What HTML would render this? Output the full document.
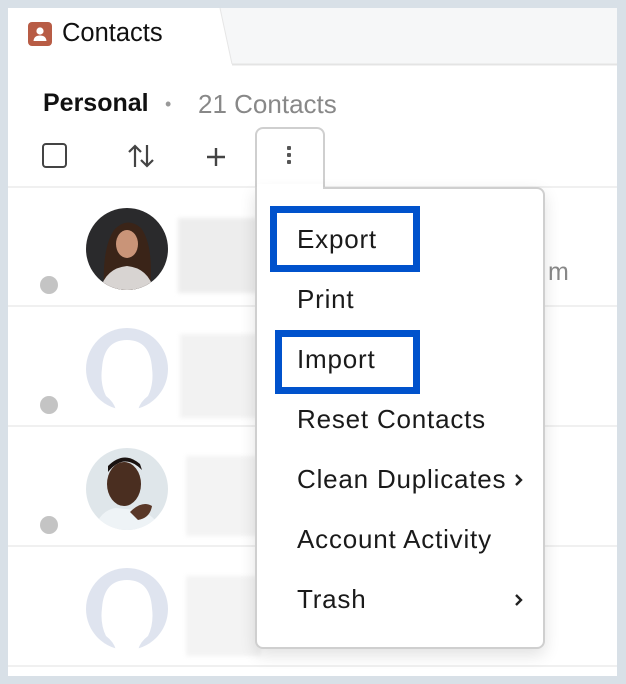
<!DOCTYPE html>
<html><head><meta charset="utf-8"><style>
*{margin:0;padding:0;box-sizing:border-box}
body{width:626px;height:684px;background:#d8e0e7;font-family:"Liberation Sans",sans-serif;position:relative;overflow:hidden}
#main{position:absolute;left:8px;top:8px;width:609px;height:668px;background:#fff;overflow:hidden}
.abs{position:absolute}
.sep{position:absolute;left:0;width:609px;height:2px;background:#f0f0f0}
.dot{position:absolute;width:18px;height:18px;border-radius:50%;background:#c4c4c4}
.blur{position:absolute;background:#ededed;filter:blur(2px)}
.item{position:absolute;left:297px;font-size:26px;letter-spacing:.8px;color:#1a1a1a;line-height:30px}
.box{position:absolute;border:7px solid #0052cc}
</style></head><body>
<div id="main">
 <svg class="abs" style="left:0;top:0" width="609" height="58"><polygon points="212,0 609,0 609,56 224,56" fill="#f6f7f8"/><line x1="212" y1="0" x2="224" y2="56" stroke="#e6e6e6"/><line x1="224" y1="56.5" x2="609" y2="56.5" stroke="#e4e4e4" stroke-width="2"/></svg>
 <svg class="abs" style="left:20px;top:14px" width="24" height="24"><rect width="24" height="24" rx="4" fill="#b85c45"/><circle cx="12" cy="9" r="3.6" fill="#fff"/><path d="M5.5 19 Q6 13.5 12 13.5 Q18 13.5 18.5 19 Z" fill="#fff"/></svg>
 <div class="abs" style="left:54px;top:11px;font-size:25.5px;color:#111">Contacts</div>
 <div class="abs" style="left:35px;top:81px;font-size:25px;font-weight:bold;color:#111">Personal</div>
 <div class="abs" style="left:157px;top:86px;font-size:18px;color:#999">•</div>
 <div class="abs" style="left:190px;top:81px;font-size:26px;color:#888">21 Contacts</div>
 <div class="abs" style="left:34px;top:135px;width:25px;height:25px;border:2px solid #444;border-radius:4px"></div>
 <svg class="abs" style="left:118px;top:134px" width="32" height="28" fill="none" stroke="#444" stroke-width="2.2"><path d="M9 25V4M3 10l6-6 6 6"/><path d="M21 3v21M15 18l6 6 6-6"/></svg>
 <svg class="abs" style="left:197px;top:138px" width="22" height="22" stroke="#444" stroke-width="2.4"><path d="M11 2v18M2 11h18"/></svg>
 <div class="sep" style="top:178px;width:247px"></div>
 <div class="sep" style="top:178px;left:317px;width:292px"></div>
 <div class="sep" style="top:297px"></div><div class="sep" style="top:417px"></div><div class="sep" style="top:537px"></div><div class="sep" style="top:657px"></div>
 <div class="dot" style="left:32px;top:268px"></div><div class="dot" style="left:32px;top:388px"></div><div class="dot" style="left:32px;top:508px"></div>
 <div class="blur" style="left:170px;top:210px;width:80px;height:75px"></div>
 <div class="blur" style="left:172px;top:326px;width:80px;height:84px;background:#f2f2f2"></div>
 <div class="blur" style="left:178px;top:448px;width:75px;height:80px;background:#f3f3f3"></div>
 <div class="blur" style="left:178px;top:568px;width:75px;height:80px;background:#f3f3f3"></div>
 <div class="abs" style="left:540px;top:250px;font-size:25px;color:#888">m</div>
 <svg class="abs" style="left:78px;top:200px" width="82" height="82"><defs><clipPath id="c1"><circle cx="41" cy="41" r="41"/></clipPath></defs><g clip-path="url(#c1)"><rect width="82" height="82" fill="#2a2a2c"/><path d="M18 82 Q16 40 28 22 Q41 8 55 20 Q68 38 64 82Z" fill="#3a2418"/><ellipse cx="41" cy="36" rx="11" ry="14" fill="#c99478"/><path d="M14 82 Q20 60 41 58 Q62 60 68 82Z" fill="#d8d4d2"/></g></svg>
 <svg class="abs" style="left:78px;top:320px" width="82" height="82"><circle cx="41" cy="41" r="41" fill="#dfe4ef"/><path d="M20 68 Q14 56 16 40 Q18 12 41 12 Q64 12 66 40 Q68 56 62 68 Q54 74 52 82 L30 82 Q28 74 20 68Z" fill="#fff"/></svg>
 <svg class="abs" style="left:78px;top:440px" width="82" height="82"><defs><clipPath id="c3"><circle cx="41" cy="41" r="41"/></clipPath></defs><g clip-path="url(#c3)"><rect width="82" height="82" fill="#dfe6ea"/><ellipse cx="38" cy="36" rx="17" ry="22" fill="#4a2e20"/><path d="M22 24 Q38 4 56 22 L54 16 Q38 2 22 18Z" fill="#1a1210"/><path d="M8 82 Q14 62 30 60 L50 62 Q70 66 74 82Z" fill="#eef3f6"/><path d="M44 64 Q56 52 66 58 Q64 70 52 72Z" fill="#5a3828"/></g></svg>
 <svg class="abs" style="left:78px;top:560px" width="82" height="82"><circle cx="41" cy="41" r="41" fill="#dfe4ef"/><path d="M20 68 Q14 56 16 40 Q18 12 41 12 Q64 12 66 40 Q68 56 62 68 Q54 74 52 82 L30 82 Q28 74 20 68Z" fill="#fff"/></svg>
 <div class="abs" style="left:247px;top:119px;width:70px;height:62px;border:2px solid #cfcfcf;border-bottom:none;border-radius:8px 8px 0 0;background:#fff"></div>
 <div class="abs" style="left:279px;top:138px;width:4px;height:4px;background:#555;border-radius:1px;box-shadow:0 7px 0 #555,0 14px 0 #555"></div>
 <div class="abs" style="left:247px;top:179px;width:290px;height:462px;border:2px solid #cfcfcf;border-radius:0 8px 8px 8px;background:#fff;box-shadow:0 6px 16px rgba(0,0,0,.12)"></div>
 <div class="abs" style="left:249px;top:176px;width:66px;height:6px;background:#fff"></div>
 <div class="box" style="left:262px;top:198px;width:150px;height:66px"></div>
 <div class="box" style="left:267px;top:322px;width:145px;height:64px"></div>
 <div class="item" style="left:289px;top:216px">Export</div>
 <div class="item" style="left:289px;top:276px">Print</div>
 <div class="item" style="left:289px;top:336px">Import</div>
 <div class="item" style="left:289px;top:396px">Reset Contacts</div>
 <div class="item" style="left:289px;top:456px">Clean Duplicates</div>
 <div class="item" style="left:289px;top:516px">Account Activity</div>
 <div class="item" style="left:289px;top:576px">Trash</div>
 <svg class="abs" style="left:505px;top:465px" width="12" height="14" fill="none" stroke="#222" stroke-width="2.4"><path d="M3 2l5 5-5 5"/></svg>
 <svg class="abs" style="left:505px;top:585px" width="12" height="14" fill="none" stroke="#222" stroke-width="2.4"><path d="M3 2l5 5-5 5"/></svg>
</div>
</body></html>
